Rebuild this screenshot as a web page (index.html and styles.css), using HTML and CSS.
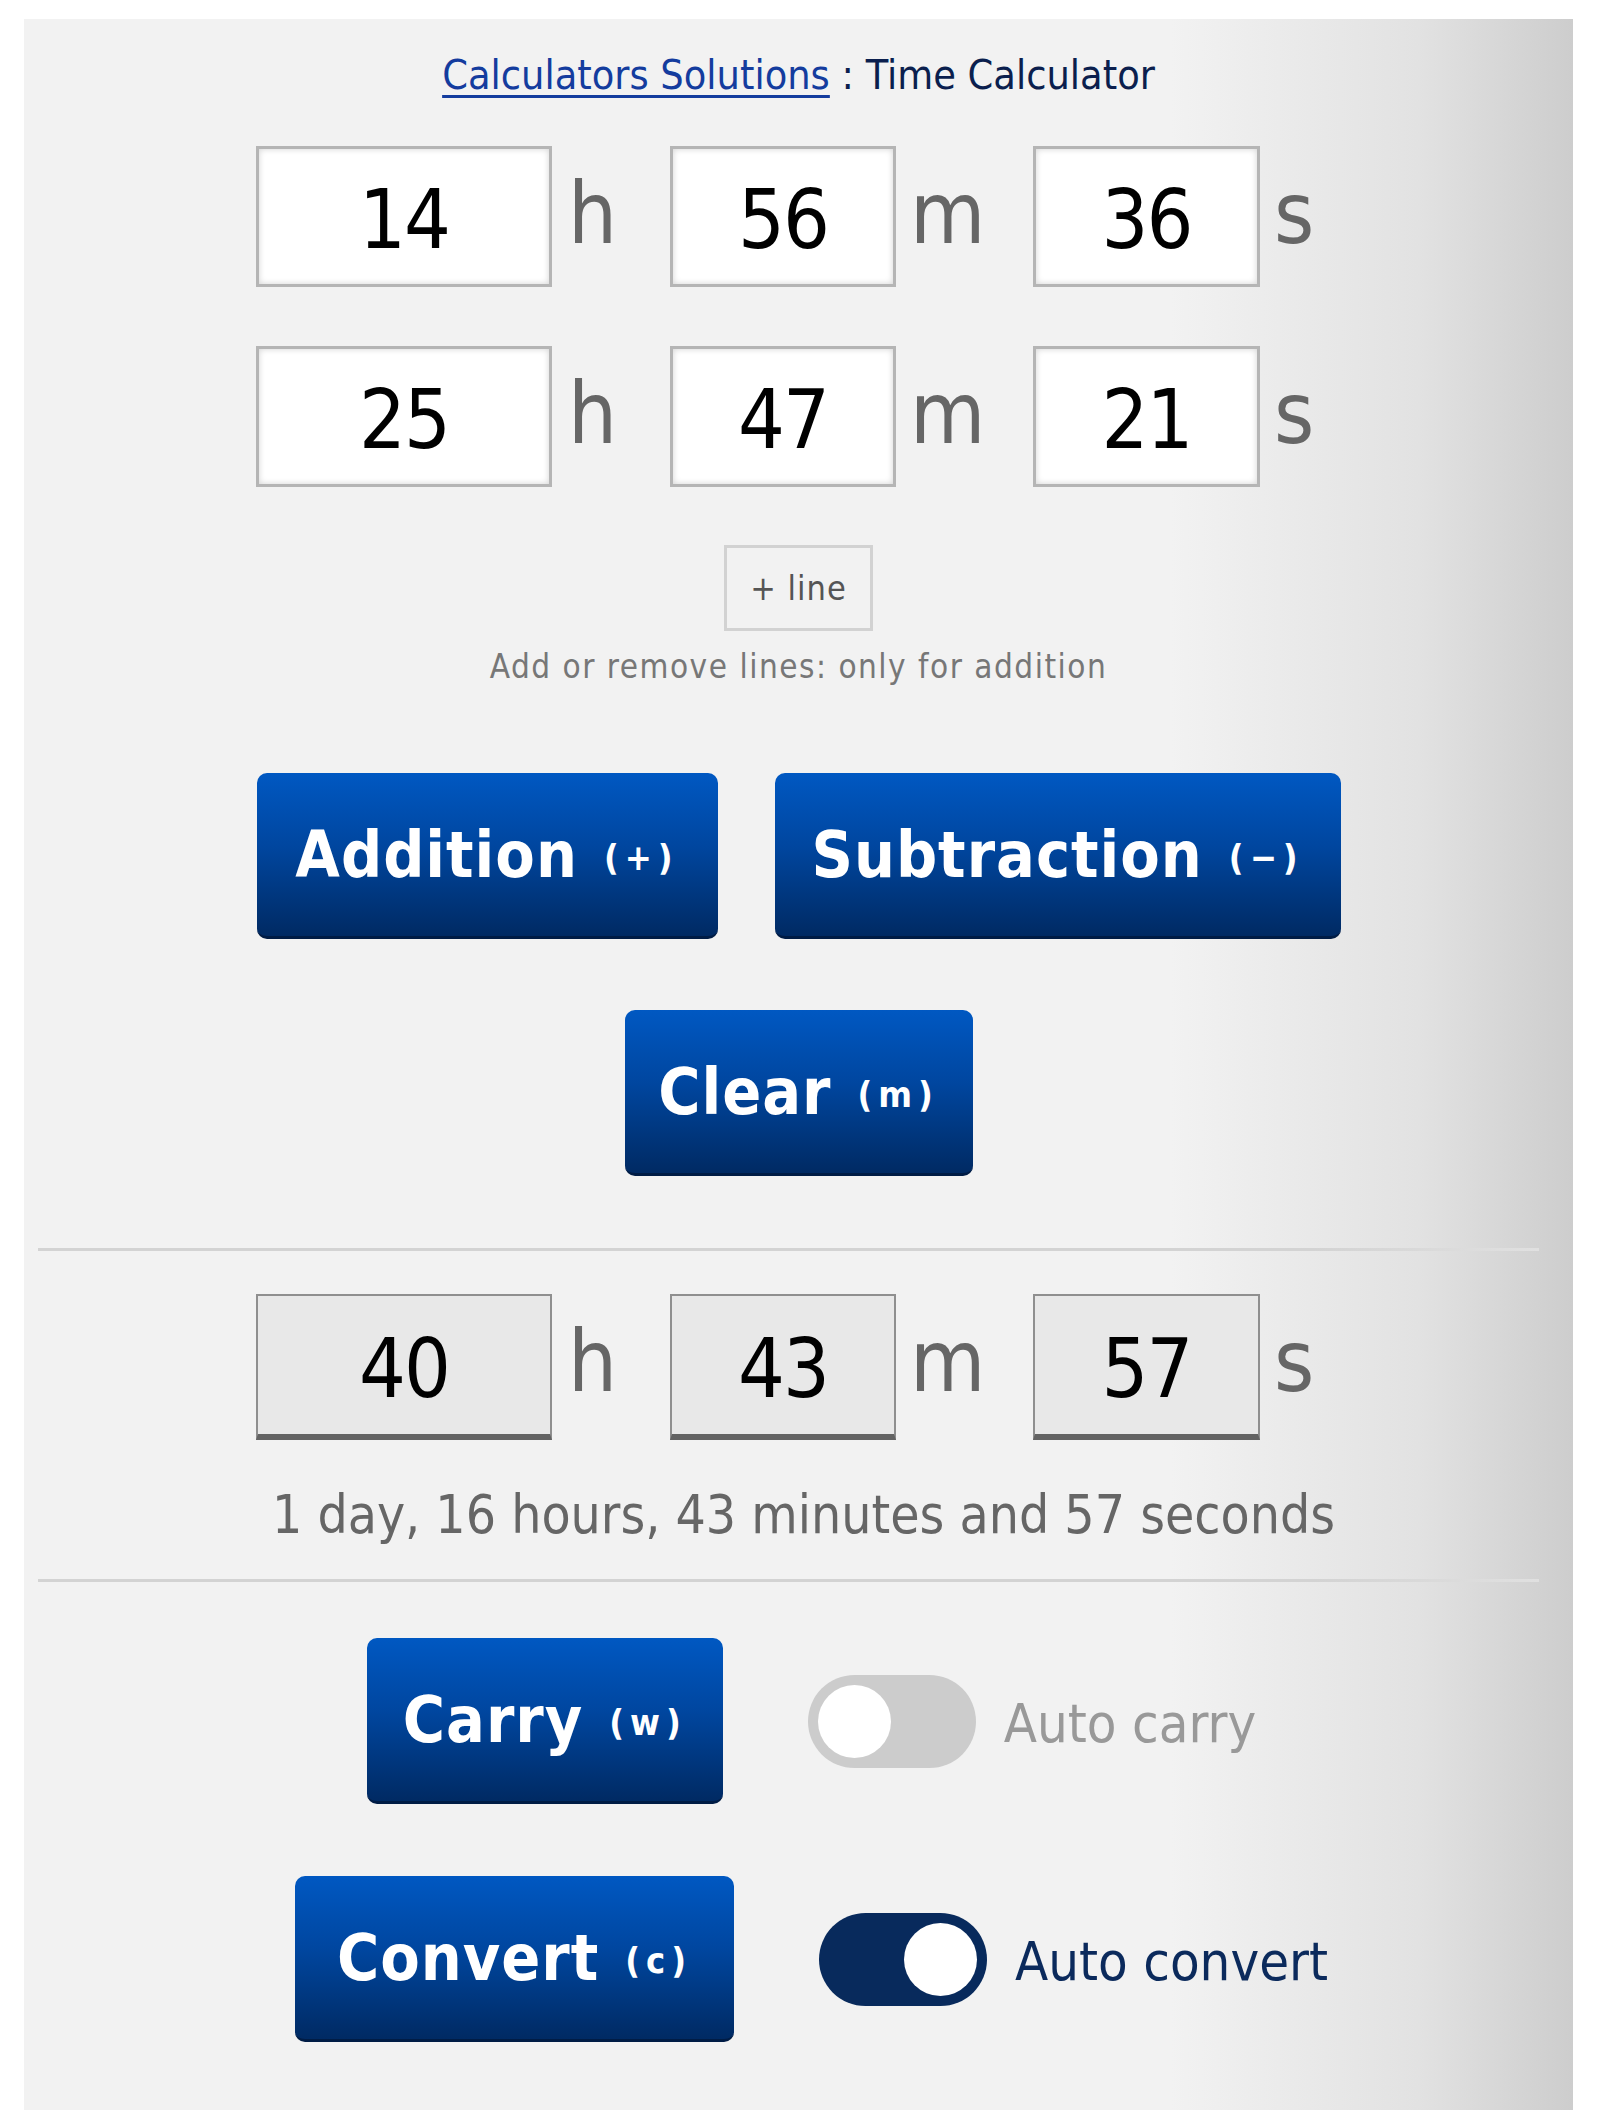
FILE: index.html
```html
<!DOCTYPE html>
<html lang="en">
<head>
<meta charset="utf-8">
<title>Time Calculator</title>
<link rel="stylesheet" href="styles.css">
</head>
<body>
<div class="panel">
  <h1 class="title"><a class="title-link" href="#">Calculators Solutions</a> : Time Calculator</h1>

  <div class="time-row first-row">
    <div class="tbox tbox-h">14</div><div class="unit unit-h">h</div>
    <div class="tbox tbox-m">56</div><div class="unit unit-m">m</div>
    <div class="tbox tbox-s">36</div><div class="unit unit-s">s</div>
  </div>
  <div class="time-row second-row">
    <div class="tbox tbox-h">25</div><div class="unit unit-h">h</div>
    <div class="tbox tbox-m">47</div><div class="unit unit-m">m</div>
    <div class="tbox tbox-s">21</div><div class="unit unit-s">s</div>
  </div>

  <button class="line-btn">+ line</button>
  <p class="helper">Add or remove lines: only for addition</p>

  <div class="ops-row">
    <button class="big-btn btn-add">Addition <span class="key">(+)</span></button>
    <button class="big-btn btn-sub">Subtraction <span class="key">(&minus;)</span></button>
  </div>
  <button class="big-btn btn-clear">Clear <span class="key">(m)</span></button>

  <div class="divider divider-1"></div>

  <div class="time-row result-row">
    <div class="tbox tbox-h result">40</div><div class="unit unit-h">h</div>
    <div class="tbox tbox-m result">43</div><div class="unit unit-m">m</div>
    <div class="tbox tbox-s result">57</div><div class="unit unit-s">s</div>
  </div>
  <p class="result-text">1 day, 16 hours, 43 minutes and 57 seconds</p>

  <div class="divider divider-2"></div>

  <div class="opt-row carry-row">
    <button class="big-btn btn-carry">Carry <span class="key">(w)</span></button>
    <span class="toggle toggle-off"><span class="knob"></span></span>
    <span class="opt-label opt-off">Auto carry</span>
  </div>
  <div class="opt-row convert-row">
    <button class="big-btn btn-convert">Convert <span class="key">(c)</span></button>
    <span class="toggle toggle-on"><span class="knob"></span></span>
    <span class="opt-label opt-on">Auto convert</span>
  </div>
</div>
</body>
</html>
```

FILE: styles.css
```css
* { box-sizing: border-box; }

html, body {
  margin: 0;
  padding: 0;
  background: #ffffff;
}

body {
  font-family: "DejaVu Sans Condensed", "DejaVu Sans", sans-serif;
}

.panel {
  margin: 19px 0 0 24px;
  width: 1549px;
  height: 2091px;
  background: linear-gradient(to right, #f2f2f2 0%, #f2f2f2 74%, #e2e2e2 90%, #cdcdcd 100%);
  display: flex;
  flex-direction: column;
  align-items: center;
}

.title {
  margin: 32px 0 0 0;
  height: 48px;
  line-height: 48px;
  font-size: 41px;
  font-weight: normal;
  color: #0b1f4e;
  white-space: nowrap;
}

.title-link {
  color: #143c9e;
  text-decoration: underline;
  text-decoration-thickness: 3px;
  text-underline-offset: 6px;
}

.time-row {
  align-self: stretch;
  display: flex;
  padding-left: 232px;
  height: 141px;
}

.first-row { margin-top: 47px; }
.second-row { margin-top: 59px; }
.result-row { margin-top: 43px; height: 146px; }

.tbox {
  height: 141px;
  background: #ffffff;
  border: 3px solid #b5b5b5;
  box-shadow: inset 0 0 6px rgba(0, 0, 0, 0.18);
  display: flex;
  align-items: center;
  justify-content: center;
  font-size: 82px;
  color: #000000;
  padding-top: 6px;
  letter-spacing: -2px;
}

.tbox-h { width: 296px; }
.tbox-m { width: 226px; }
.tbox-s { width: 227px; }

.tbox.result {
  height: 146px;
  background: #e8e8e8;
  border: 2px solid #8f8f8f;
  border-bottom: 6px solid #636363;
  box-shadow: none;
  padding-top: 6px;
}

.unit {
  font-size: 86px;
  color: #666666;
  line-height: 1;
  padding-top: 24px;
}

.unit-h { width: 118px; padding-left: 16px; }
.unit-m { width: 137px; padding-left: 14px; }
.unit-s { width: 80px; padding-left: 14px; }

.line-btn {
  margin-top: 58px;
  width: 149px;
  height: 86px;
  background: #f2f2f2;
  border: 3px solid #d2d2d2;
  font-family: inherit;
  font-size: 34px;
  color: #555555;
  padding: 0;
  letter-spacing: 1px;
}

.helper {
  margin: 16px 0 0 0;
  height: 40px;
  line-height: 40px;
  font-size: 33px;
  letter-spacing: 1.5px;
  color: #777777;
}

.ops-row {
  margin-top: 86px;
  display: flex;
  gap: 57px;
}

.big-btn {
  height: 166px;
  border: none;
  border-radius: 10px;
  background: linear-gradient(to bottom, #0058c2 0%, #00469f 45%, #002a63 100%);
  border-bottom: 3px solid #001c45;
  color: #ffffff;
  font-family: inherit;
  font-weight: bold;
  font-size: 64px;
  letter-spacing: 1px;
  padding: 0;
  display: flex;
  align-items: center;
  justify-content: center;
  white-space: nowrap;
}

.key {
  font-size: 36px;
  letter-spacing: 6px;
  margin-left: 26px;
  padding-top: 6px;
}

.btn-add { width: 461px; }
.btn-sub { width: 566px; }
.btn-clear { width: 348px; margin-top: 71px; }
.btn-carry { width: 356px; }
.btn-convert { width: 439px; }

.divider {
  align-self: stretch;
  height: 3px;
  margin: 0 34px 0 14px;
  background: linear-gradient(to right, #d3d3d3 0%, #d3d3d3 85%, #e0e0e0 100%);
}

.divider-1 { margin-top: 72px; }
.divider-2 { margin-top: 29px; }

.result-text {
  margin: 40px 0 0 0;
  height: 70px;
  line-height: 70px;
  font-size: 53px;
  color: #666666;
  padding-left: 10px;
  white-space: nowrap;
}

.opt-row {
  display: flex;
  align-items: center;
  padding-left: 26px;
}

.carry-row { margin-top: 56px; }
.convert-row { margin-top: 72px; }

.toggle {
  width: 168px;
  height: 93px;
  border-radius: 47px;
  display: flex;
  align-items: center;
  padding: 0 10px;
  margin-left: 85px;
}

.knob {
  width: 73px;
  height: 73px;
  border-radius: 50%;
  background: #ffffff;
}

.toggle-off { background: #cccccc; justify-content: flex-start; }
.toggle-on { background: #082a5c; justify-content: flex-end; }

.opt-label {
  margin-left: 28px;
  font-size: 54px;
  white-space: nowrap;
  padding-top: 4px;
}

.opt-off { color: #999999; }
.opt-on { color: #0b2a5c; }
```
